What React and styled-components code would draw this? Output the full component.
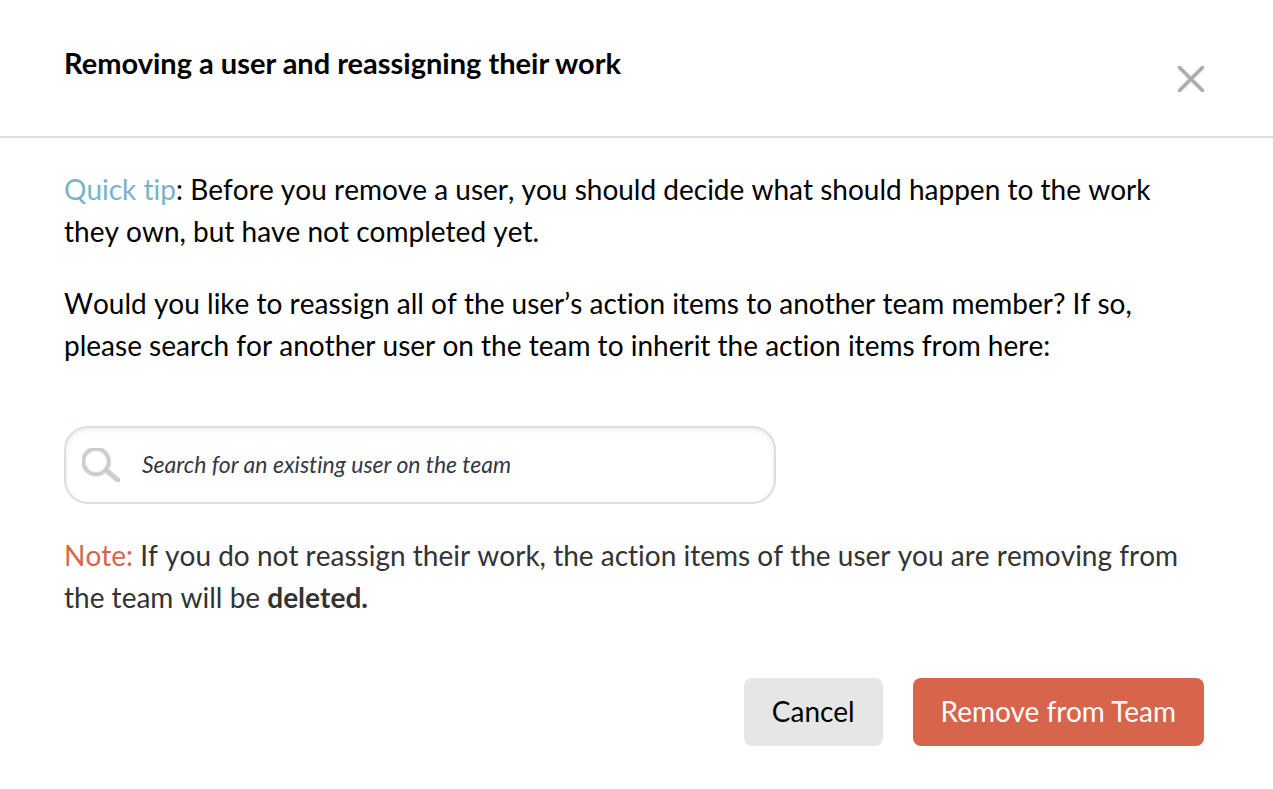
import { useState } from 'react';
import styled, { createGlobalStyle } from 'styled-components';

const GlobalStyle = createGlobalStyle`
  * {
    box-sizing: border-box;
  }
  body {
    margin: 0;
    background: #ffffff;
    color: #000000;
    font-family: Lato, 'Liberation Sans', sans-serif;
    font-size: 28px;
    font-variant-ligatures: none;
    line-height: 42px;
  }
`;

const DialogBlock = styled.div`
  width: 100%;
`;
const HeaderBlock = styled.header`
  display: flex;
  justify-content: space-between;
  align-items: flex-start;
  padding: 42px 69px 44px 64px;
  border-bottom: 2px solid #dddddd;
`;
const Title = styled.h1`
  margin: 0;
  padding-bottom: 8px;
  font-size: 29px;
  font-weight: 700;
  line-height: 42px;
`;
const CloseButton = styled.button`
  display: flex;
  margin-top: 24px;
  padding: 0;
  border: none;
  background: none;
  cursor: pointer;
`;
const ContentBlock = styled.div`
  padding: 30px 69px 44px 64px;
`;
const Paragraph = styled.p`
  margin: 0 0 30px;
  padding-right: 16px;
  color: ${({ $muted }) => ($muted ? '#333333' : '#000000')};
  font-kerning: none;
`;
const Highlight = styled.span`
  color: ${({ $color }) => $color};
`;
const SearchBlock = styled.label`
  display: flex;
  align-items: center;
  width: 100%;
  max-width: 712px;
  height: 78px;
  margin: 60px 0 30px;
  padding: 0 16px;
  border: 2px solid #d9dee2;
  border-radius: 24px;
  box-shadow: inset 0 2px 4px rgba(0, 0, 0, 0.08);
`;
const SearchInput = styled.input`
  flex: 1;
  min-width: 0;
  height: 42px;
  margin-left: 22px;
  padding: 0 0 2px;
  border: none;
  outline: none;
  background: transparent;
  color: #333844;
  font-family: inherit;
  font-size: 23px;
  font-style: italic;
  font-variant-ligatures: inherit;

  &::placeholder {
    color: #333844;
    opacity: 1;
  }
`;
const ButtonBlock = styled.div`
  display: flex;
  justify-content: flex-end;
  gap: 30px;
  margin-top: 60px;
`;
const Button = styled.button`
  height: 68px;
  padding: 0 28px 2px;
  border: none;
  border-radius: 8px;
  background: ${({ $danger }) => ($danger ? '#d7654c' : '#e6e6e6')};
  color: ${({ $danger }) => ($danger ? '#ffffff' : '#000000')};
  font-family: inherit;
  font-size: 28px;
  font-variant-ligatures: inherit;
  cursor: pointer;
`;

const CloseIcon = () => (
  <svg width="26" height="26" viewBox="0 0 26 26" aria-hidden="true">
    <path d="M0 0L26 26M26 0L0 26" stroke="#d2d2d2" strokeWidth="4.6" />
    <path d="M0 0L26 26M26 0L0 26" stroke="#a8a8a8" strokeWidth="2.6" />
  </svg>
);

const SearchIcon = () => (
  <svg width="38" height="34" viewBox="0 0 38 34" fill="none" aria-hidden="true">
    <circle cx="14" cy="13.5" r="12.8" stroke="#e2e2e2" strokeWidth="5" />
    <path d="M24 22L38 34" stroke="#e2e2e2" strokeWidth="6" />
    <circle cx="14" cy="13.5" r="12.8" stroke="#cccccc" strokeWidth="3" />
    <path d="M24 22L38 34" stroke="#cccccc" strokeWidth="4" />
  </svg>
);

const App = () => {
  const [userInput, setUserInput] = useState('');

  const onChange = (e) => {
    setUserInput(e.target.value);
  };

  return (
    <>
      <GlobalStyle />
      <DialogBlock role="dialog" aria-labelledby="dialog-title">
        <HeaderBlock>
          <Title id="dialog-title">
            Removing a user and reassigning their work
          </Title>
          <CloseButton type="button" aria-label="Close">
            <CloseIcon />
          </CloseButton>
        </HeaderBlock>
        <ContentBlock>
          <Paragraph>
            <Highlight $color="#7ab3c8">Quick tip</Highlight>: Before you remove
            a user, you should decide what should happen to the work they own,
            but have not completed yet.
          </Paragraph>
          <Paragraph>
            Would you like to reassign all of the user’s action items to another
            team member? If so, please search for another user on the team to
            inherit the action items from here:
          </Paragraph>
          <SearchBlock htmlFor="user-search">
            <SearchIcon />
            <SearchInput
              id="user-search"
              type="text"
              aria-label="Search for an existing user on the team"
              placeholder="Search for an existing user on the team"
              value={userInput}
              onChange={onChange}
            />
          </SearchBlock>
          <Paragraph $muted>
            <Highlight $color="#d7654c">Note:</Highlight> If you do not reassign
            their work, the action items of the user you are removing from the
            team will be <strong>deleted.</strong>
          </Paragraph>
          <ButtonBlock>
            <Button type="button">Cancel</Button>
            <Button type="button" $danger>
              Remove from Team
            </Button>
          </ButtonBlock>
        </ContentBlock>
      </DialogBlock>
    </>
  );
};

export default App;
